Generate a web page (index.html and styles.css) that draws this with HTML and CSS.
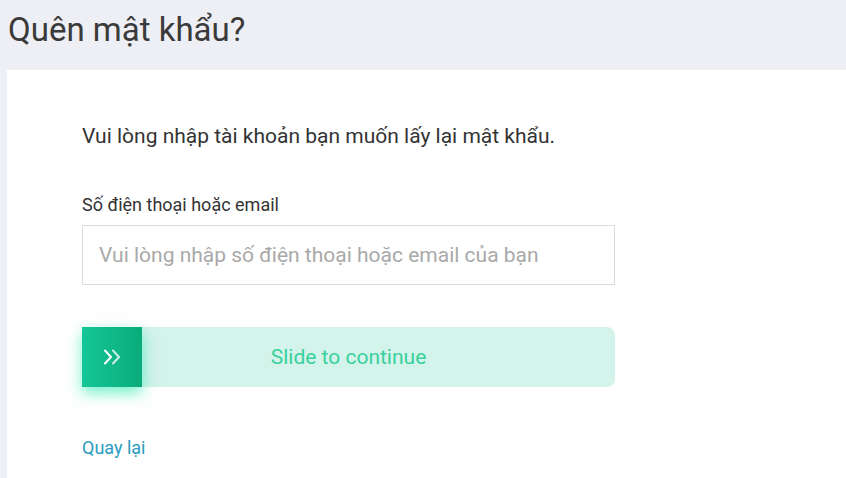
FILE: index.html
```html
<!DOCTYPE html>
<html lang="vi">
<head>
<meta charset="utf-8">
<title>Quên mật khẩu?</title>
<link rel="stylesheet" href="styles.css">
</head>
<body>
<header class="page-head">
  <h1 class="page-title">Quên mật khẩu?</h1>
</header>
<main class="card">
  <div class="form">
    <p class="intro">Vui lòng nhập tài khoản bạn muốn lấy lại mật khẩu.</p>
    <label class="label" for="acc">Số điện thoại hoặc email</label>
    <input class="input" id="acc" type="text" placeholder="Vui lòng nhập số điện thoại hoặc email của bạn">
    <div class="slider">
      <span class="slider-text">Slide to continue</span>
      <div class="handle">
        <svg width="20" height="16" viewBox="0 0 20 16" fill="none" stroke-linecap="round" stroke-linejoin="round">
          <path d="M3 1.5 L9 8 L3 14.5" stroke="#ffffff" stroke-width="2"/>
          <path d="M11 1.5 L17 8 L11 14.5" stroke="#cdeee3" stroke-width="2"/>
        </svg>
      </div>
    </div>
    <a class="back" href="#">Quay lại</a>
  </div>
</main>
</body>
</html>
```
FILE: styles.css
```css
html, body {
  margin: 0;
  padding: 0;
  height: 100%;
}
body {
  background: #eeeff4;
  font-family: Roboto, "Liberation Sans", Arial, sans-serif;
  color: #333;
  display: flex;
  flex-direction: column;
  overflow: hidden;
}
.page-head {
  height: 70px;
  padding-left: 8px;
  box-sizing: border-box;
}
.page-title {
  margin: 0;
  padding-top: 10px;
  font-size: 33px;
  font-weight: 400;
  line-height: 40px;
  color: #3a3a3a;
}
.card {
  flex: 1;
  margin-left: 7px;
  background: #fff;
  padding: 0 75px;
}
.form {
  width: 533px;
  display: flex;
  flex-direction: column;
}
.intro {
  margin: 52px 0 0;
  font-size: 21px;
  line-height: 28px;
  color: #333;
}
.label {
  margin-top: 43px;
  font-size: 18px;
  line-height: 24px;
  color: #333;
}
.input {
  margin-top: 8px;
  height: 60px;
  box-sizing: border-box;
  border: 1px solid #dcdcdc;
  border-radius: 0;
  padding: 0 16px;
  font-family: inherit;
  font-size: 21px;
  color: #333;
  outline: none;
}
.input::placeholder {
  color: #a9a9a9;
}
.slider {
  margin-top: 42px;
  height: 60px;
  background: #d4f3ea;
  border-radius: 0 8px 8px 0;
  display: flex;
  align-items: center;
}
.slider-text {
  order: 2;
  flex: 1;
  margin-left: -60px;
  text-align: center;
  font-size: 21px;
  color: #38d19e;
}
.handle {
  order: 1;
  position: relative;
  z-index: 1;
  width: 60px;
  height: 60px;
  flex: none;
  background: linear-gradient(90deg, #14c796, #0bab7b);
  box-shadow: 0 6px 14px rgba(0, 230, 160, 0.55);
  display: flex;
  align-items: center;
  justify-content: center;
}
.back {
  margin-top: 49px;
  align-self: flex-start;
  font-size: 18px;
  line-height: 24px;
  color: #2a9cc0;
  text-decoration: none;
}
```
